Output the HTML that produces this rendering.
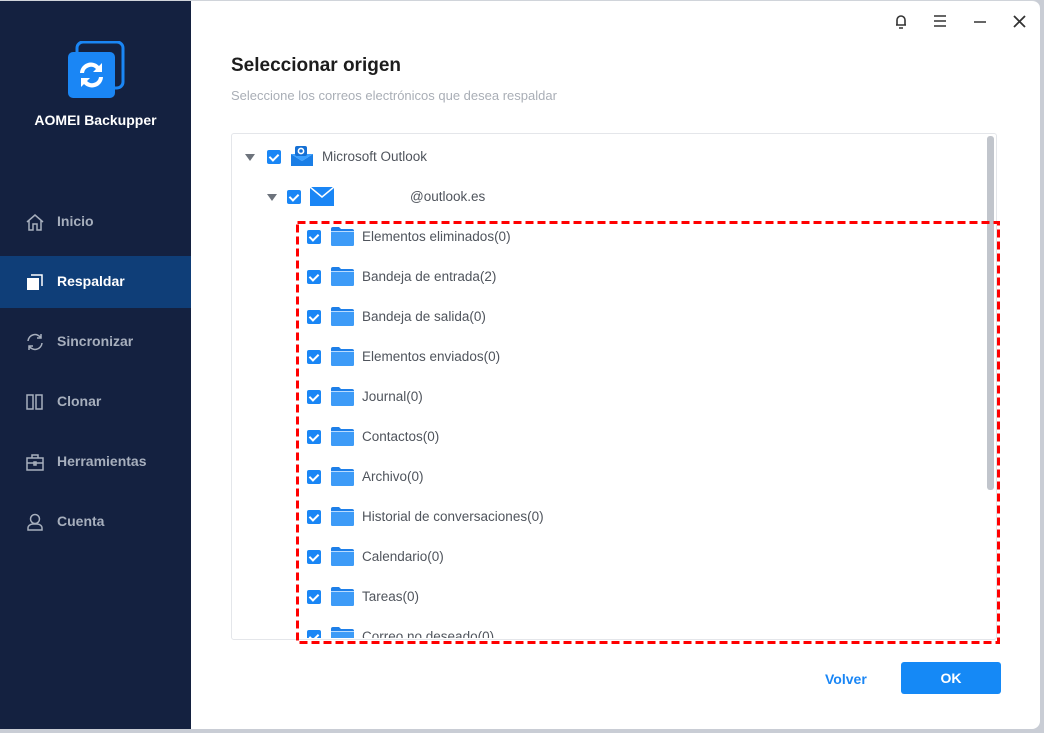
<!DOCTYPE html>
<html><head><meta charset="utf-8"><style>
*{margin:0;padding:0;box-sizing:border-box}
body{width:1044px;height:733px;background:#c9cdd5;font-family:"Liberation Sans",sans-serif;position:relative;overflow:hidden}
.win{position:absolute;left:0;top:0;width:1040px;height:729px;background:#fff;border-radius:0 8px 8px 0;overflow:hidden;border-top:1px solid #d0d4da}
.side{position:absolute;left:0;top:0;width:191px;height:729px;background:#142140}
.logo{position:absolute;left:68px;top:40px}
.brand{position:absolute;left:0;width:191px;top:111px;text-align:center;color:#fff;font-weight:bold;font-size:14px}
.nav{position:absolute;left:0;width:191px;height:52px;color:#a7afbd;font-size:14px;font-weight:bold}
.nav span{position:absolute;left:57px;top:17px}
.nav svg{position:absolute;left:25px;top:16px}
.nav.act{background:#0f3e78;color:#fff}
h1{position:absolute;left:231px;top:54px;font-size:19px;font-weight:bold;color:#1d1d1d}
.sub{position:absolute;left:231px;top:87px;font-size:13px;color:#a9aeb6}
.box{position:absolute;left:231px;top:132px;width:766px;height:507px;border:1px solid #e4e6ea;border-radius:3px;overflow:hidden}
.sb{position:absolute;left:987px;top:135px;width:7px;height:354px;background:#c1c5cc;border-radius:3px}
.row{position:absolute;height:20px;font-size:13.5px;color:#4f545c;white-space:nowrap}
.cb{position:absolute;width:14px;height:14px;background:#1a86f5;border-radius:2px}
.cb:after{content:"";position:absolute;left:4px;top:2px;width:4px;height:7px;border:solid #fff;border-width:0 2px 2px 0;transform:rotate(45deg)}
.tri{position:absolute;width:0;height:0;border-left:5px solid transparent;border-right:5px solid transparent;border-top:7px solid #6d737c}
.fold{position:absolute;width:23px;height:19px}
.red{position:absolute;left:296px;top:220px}
.btn{position:absolute;left:901px;top:661px;width:100px;height:32px;background:#1589f6;border-radius:3px;color:#fff;font-weight:bold;font-size:14px;text-align:center;line-height:32px}
.volver{position:absolute;left:825px;top:670px;color:#1a86f5;font-weight:bold;font-size:14px}
</style></head><body>
<div class="win">
<div class="side">
<svg class="logo" width="57" height="58" viewBox="0 0 57 58"><rect x="9" y="1" width="46" height="46" rx="6" fill="none" stroke="#1a86f5" stroke-width="3"/><rect x="0" y="11" width="47" height="46" rx="5" fill="#1a86f5"/><path d="M12 32a11 11 0 0 1 19-7l3-3v9h-9l3-3a7 7 0 0 0-12 4z" fill="#fff"/><path d="M35 36a11 11 0 0 1-19 7l-3 3v-9h9l-3 3a7 7 0 0 0 12-4z" fill="#fff"/></svg>
<div class="brand">AOMEI Backupper</div>
<div class="nav" style="top:195px"><svg width="20" height="20" viewBox="0 0 20 20" fill="none" stroke="#a7afbd" stroke-width="1.5"><path d="M2 10L10 3l8 7M4 8v10h4v-6h4v6h4V8"/></svg><span>Inicio</span></div>
<div class="nav act" style="top:255px"><svg width="20" height="20" viewBox="0 0 20 20"><rect x="2" y="6" width="12" height="12" fill="#fff"/><path d="M6 3h11v11" fill="none" stroke="#fff" stroke-width="1.5"/></svg><span>Respaldar</span></div>
<div class="nav" style="top:315px"><svg width="20" height="20" viewBox="0 0 20 20" fill="none" stroke="#a7afbd" stroke-width="1.5"><path d="M3 9a7 7 0 0 1 13-3M17 11a7 7 0 0 1-13 3M16 2v4h-4M4 18v-4h4"/></svg><span>Sincronizar</span></div>
<div class="nav" style="top:375px"><svg width="20" height="20" viewBox="0 0 20 20" fill="none" stroke="#a7afbd" stroke-width="1.5"><rect x="2" y="3" width="6" height="14"/><rect x="11" y="3" width="6" height="14"/></svg><span>Clonar</span></div>
<div class="nav" style="top:435px"><svg width="20" height="20" viewBox="0 0 20 20" fill="none" stroke="#a7afbd" stroke-width="1.5"><rect x="2" y="6" width="16" height="12"/><path d="M7 6V3h6v3M2 11h16M9 10h2v3H9z"/></svg><span>Herramientas</span></div>
<div class="nav" style="top:495px"><svg width="20" height="20" viewBox="0 0 20 20" fill="none" stroke="#a7afbd" stroke-width="1.5"><circle cx="10" cy="7" r="4.5"/><path d="M3 18v-2a5 4 0 0 1 5-4h4a5 4 0 0 1 5 4v2z"/></svg><span>Cuenta</span></div>
</div>
<svg style="position:absolute;left:893px;top:12px" width="16" height="16" viewBox="0 0 16 16" fill="none" stroke="#333" stroke-width="1.6"><path d="M3 12h10M4 12V7a4 4 0 0 1 8 0v5M6 15h4"/></svg>
<svg style="position:absolute;left:933px;top:13px" width="14" height="14" viewBox="0 0 14 14" stroke="#333" stroke-width="1.6"><path d="M1 2h12M1 7h12M1 12h12"/></svg>
<svg style="position:absolute;left:973px;top:13px" width="14" height="14" viewBox="0 0 14 14" stroke="#333" stroke-width="1.6"><path d="M1 8h12"/></svg>
<svg style="position:absolute;left:1013px;top:14px" width="13" height="13" viewBox="0 0 13 13" stroke="#333" stroke-width="1.8"><path d="M1 1l11 11M12 1L1 12"/></svg>
<h1>Seleccionar origen</h1>
<div class="sub">Seleccione los correos electrónicos que desea respaldar</div>
<div class="box"></div>
<div class="sb"></div>
<div class="tri" style="left:245px;top:153px"></div>
<div class="cb" style="left:267px;top:149px"></div>
<svg style="position:absolute;left:290px;top:144px" width="24" height="22" viewBox="0 0 24 22"><path d="M1 9l11 7 11-7v12H1z" fill="#1a7ee6"/><path d="M1 9l11 7 11-7" fill="#3aa0ff"/><rect x="5" y="1" width="12" height="10" rx="2" fill="#1570d4"/><circle cx="11" cy="6" r="2.6" fill="none" stroke="#fff" stroke-width="1.6"/></svg>
<div class="row" style="left:322px;top:148px">Microsoft Outlook</div>
<div class="tri" style="left:267px;top:193px"></div>
<div class="cb" style="left:287px;top:189px"></div>
<svg style="position:absolute;left:310px;top:186px" width="24" height="19" viewBox="0 0 24 19"><rect width="24" height="19" fill="#1a86f5"/><path d="M0 0l12 10L24 0" fill="none" stroke="#fff" stroke-width="1.5"/></svg>
<div class="row" style="left:410px;top:188px">@outlook.es</div>
<div id="rows"></div>
<svg class="red" width="704" height="423"><rect x="1.5" y="1.5" width="701" height="420" fill="none" stroke="#f00" stroke-width="3" stroke-dasharray="8 4"/></svg>
<div class="volver">Volver</div>
<div class="btn">OK</div>
</div>
<script>
var n=["Elementos eliminados(0)","Bandeja de entrada(2)","Bandeja de salida(0)","Elementos enviados(0)","Journal(0)","Contactos(0)","Archivo(0)","Historial de conversaciones(0)","Calendario(0)","Tareas(0)","Correo no deseado(0)"];
var h="";n.forEach(function(t,i){var y=229+i*40;
h+='<div style="position:absolute;left:0;top:0;'+(i==10?'clip-path:inset(0 0 '+(733-637)+'px 0);':'')+'width:1044px;height:733px"><div class="cb" style="left:307px;top:'+y+'px"></div><svg class="fold" style="left:331px;top:'+(y-3)+'px" viewBox="0 0 23 19"><path d="M0 2a2 2 0 0 1 2-2h6l2 2h11a2 2 0 0 1 2 2v13a2 2 0 0 1-2 2H2a2 2 0 0 1-2-2z" fill="#1e7fe8"/><rect x="0" y="4" width="23" height="15" rx="1.5" fill="#3d9bf7"/><rect x="0" y="4" width="23" height="1" fill="#b9dcff"/></svg><div class="row" style="left:362px;top:'+(y-1)+'px">'+t+'</div></div>';});
document.getElementById("rows").innerHTML=h;
</script>
</body></html>
